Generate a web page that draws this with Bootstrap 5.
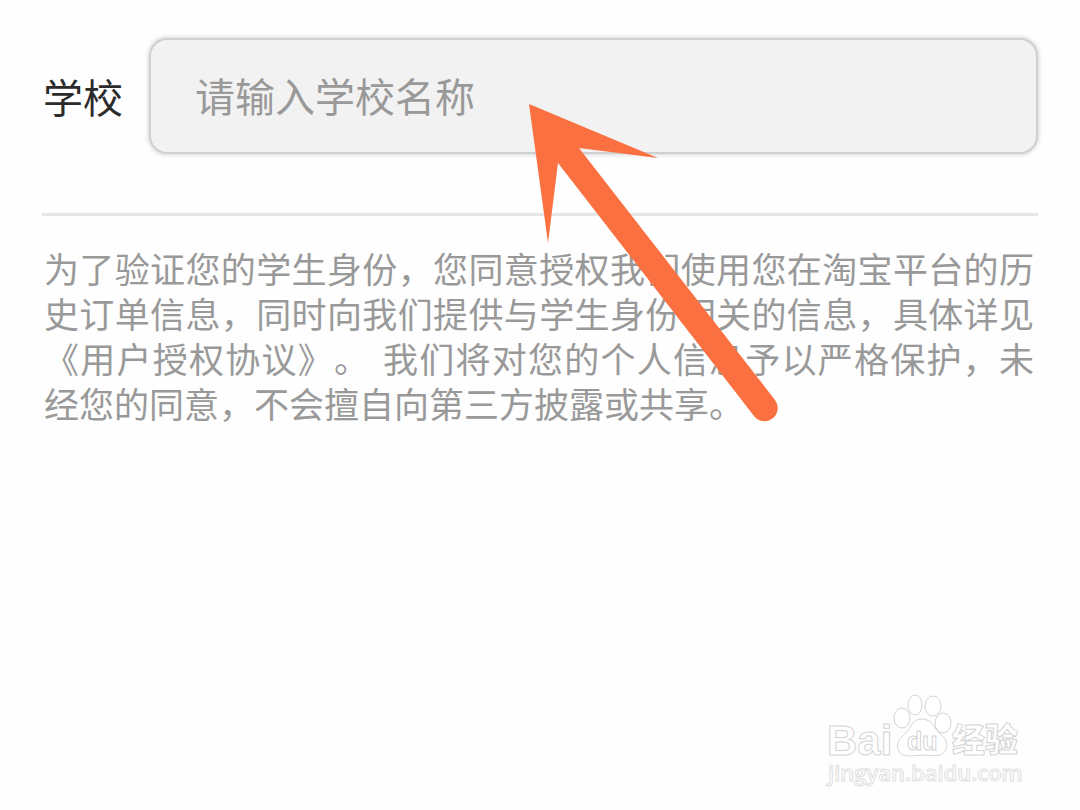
<!DOCTYPE html>
<html lang="zh-CN">
<head>
<meta charset="utf-8">
<meta name="viewport" content="width=device-width, initial-scale=1">
<title>学生身份验证</title>
<link href="https://cdn.jsdelivr.net/npm/bootstrap@5.3.0/dist/css/bootstrap.min.css" rel="stylesheet">
<style>
  body { background: #fefefe; color: #2b2b2b; font-family: "Noto Sans CJK SC", sans-serif; }
  .verify-page { padding: 38px 42px; }
  .school-row { gap: 26px; padding: 0 0 59px 1px; border-bottom: 3px solid #e6e6e6; }
  .school-label { font-size: 40px; line-height: 60px; }
  .school-input, .school-input:focus {
    height: 116px; padding: 0 44px 2px; font-size: 40px; line-height: 60px;
    background: #f2f2f2; border: 2px solid #d0d0d0; border-radius: 18px;
    box-shadow: 0 0 5px rgba(0, 0, 0, .22);
  }
  .school-input::placeholder { color: #999; opacity: 1; }
  .consent { margin: 29px 4px 0 2px; font-size: 35px; line-height: 45px; color: #999; text-align: justify; text-spacing-trim: space-all; font-kerning: none; }
  .pointer { left: 529px; top: 104px; pointer-events: none; }
  .watermark { right: 55px; bottom: 10px; }
  .watermark text, .watermark path, .watermark ellipse { fill: #fff; stroke: #d4d4d4; stroke-width: 1; }
  .watermark .brand { font: 700 42px "Liberation Sans", sans-serif; }
  .watermark .brand-cn { font: 900 33px "Noto Sans CJK SC", sans-serif; }
  .watermark .brand-du { font: 700 25px "Liberation Sans", sans-serif; }
  .watermark .site { font: 600 22px "Open Sans", sans-serif; stroke: #dedede; }
</style>
</head>
<body>
<div class="position-relative min-vh-100">
  <main class="verify-page">
    <form class="school-row d-flex align-items-center">
      <label class="school-label flex-shrink-0" for="school">学校</label>
      <input class="school-input form-control" id="school" type="text" placeholder="请输入学校名称">
    </form>
    <p class="consent">为了验证您的学生身份，您同意授权我们使用您在淘宝平台的历史订单信息，同时向我们提供与学生身份相关的信息，具体详见《用户授权协议》。&emsp13;我们将对您的个人信息予以严格保护，未经您的同意，不会擅自向第三方披露或共享。</p>
  </main>
  <svg class="pointer position-absolute" width="250" height="320" viewBox="0 0 250 320" aria-hidden="true">
    <path fill="#fa7040" d="M0 0L129 54L50 44L246 296A13 13 0 0 1 225 312L29 59L19 139Z"/>
  </svg>
  <svg class="watermark position-absolute" width="200" height="110" viewBox="0 0 200 110" role="img" aria-label="Baidu 经验">
    <text class="brand" x="2" y="65">Bai</text>
    <ellipse cx="77" cy="28" rx="8" ry="10"/>
    <ellipse cx="90" cy="15" rx="7" ry="10"/>
    <ellipse cx="108" cy="16" rx="8" ry="10"/>
    <ellipse cx="118" cy="33" rx="8" ry="10"/>
    <path d="M97 29C107 29 109 38 115 44C121 49 123 53 121 59C118 67 110 66 97 65C84 66 76 68 73 59C71 51 76 48 81 43C86 37 88 29 97 29Z"/>
    <text class="brand-du" x="82" y="60">du</text>
    <text class="brand-cn" x="127" y="62">经验</text>
    <text class="site" x="3" y="91">jingyan.baidu.com</text>
  </svg>
</div>
<script src="https://cdn.jsdelivr.net/npm/bootstrap@5.3.0/dist/js/bootstrap.bundle.min.js"></script>
</body>
</html>
